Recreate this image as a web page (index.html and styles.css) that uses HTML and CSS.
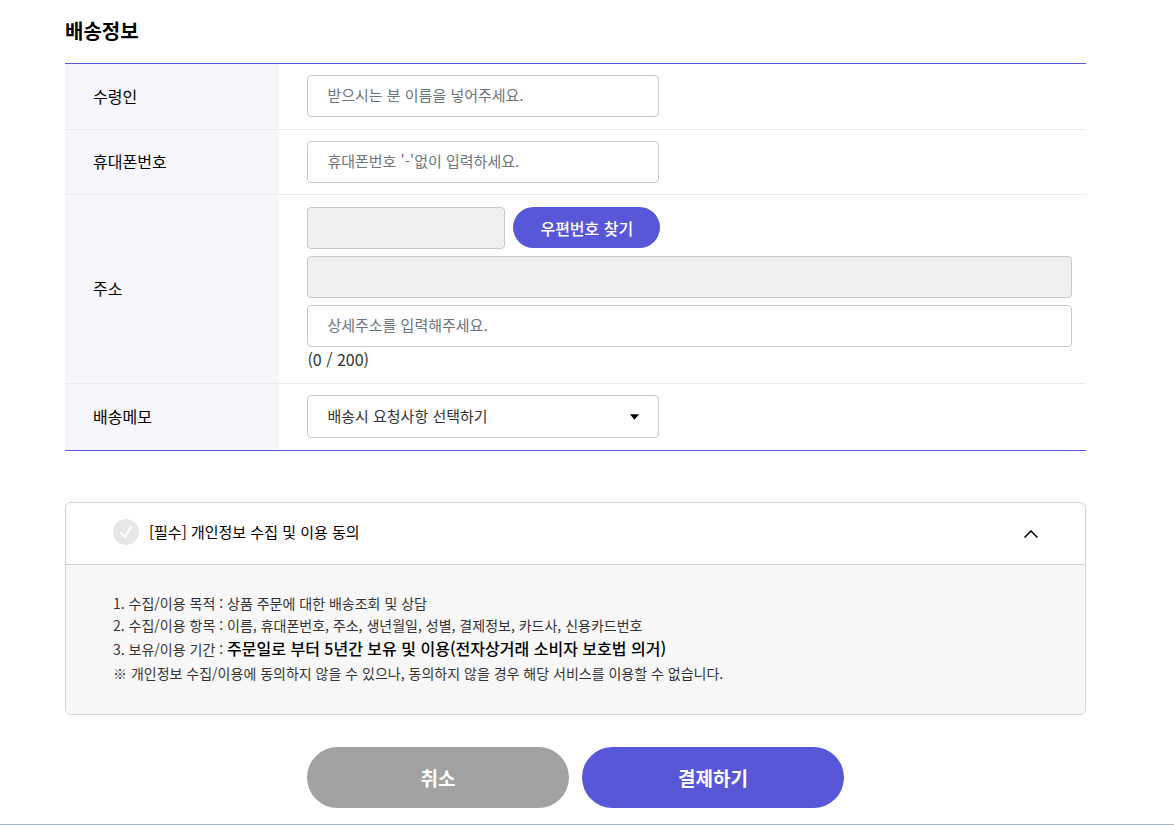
FILE: index.html
```html
<!DOCTYPE html>
<html lang="ko">
<head>
<meta charset="utf-8">
<meta name="viewport" content="width=device-width, initial-scale=1">
<title>배송정보</title>
<link rel="stylesheet" href="styles.css">
</head>
<body>
<form class="page">
  <h2 class="title">배송정보</h2>
  <table class="ship">
    <tbody>
      <tr>
        <th scope="row"><label for="name">수령인</label></th>
        <td><input class="field half" id="name" type="text" placeholder="받으시는 분 이름을 넣어주세요."></td>
      </tr>
      <tr>
        <th scope="row"><label for="phone">휴대폰번호</label></th>
        <td><input class="field half" id="phone" type="tel" placeholder="휴대폰번호 '-'없이 입력하세요."></td>
      </tr>
      <tr>
        <th scope="row"><label for="detail">주소</label></th>
        <td class="address-cell">
          <div class="address">
            <div class="zip">
              <input class="field code" type="text" aria-label="우편번호" readonly>
              <button class="find" type="button">우편번호 찾기</button>
            </div>
            <input class="field" type="text" aria-label="기본주소" readonly>
            <input class="field" id="detail" type="text" maxlength="200" placeholder="상세주소를 입력해주세요.">
          </div>
          <p class="count">(0 / 200)</p>
        </td>
      </tr>
      <tr>
        <th scope="row"><label for="memo">배송메모</label></th>
        <td>
          <div class="select half">
            <select class="field" id="memo"><option>배송시 요청사항 선택하기</option></select>
            <svg class="caret" viewBox="0 0 10 6" aria-hidden="true"><path d="M0 0h10L5 6z"/></svg>
          </div>
        </td>
      </tr>
    </tbody>
  </table>

  <section class="consent">
    <div class="consent-head">
      <label class="agree">
        <input class="check" type="checkbox">
        <svg class="tick" viewBox="0 0 26 26" aria-hidden="true"><circle cx="13" cy="13" r="13"/><path d="M8 14l4 4 6-10"/></svg>
        <span>[필수] 개인정보 수집 및 이용 동의</span>
      </label>
      <button class="toggle" type="button" aria-label="접기" aria-expanded="true">
        <svg viewBox="0 0 14 8" aria-hidden="true"><path d="M.5 7.5L7 1l6.500 6.500"/></svg>
      </button>
    </div>
    <div class="terms">
      <p>1. 수집/이용 목적 : 상품 주문에 대한 배송조회 및 상담</p>
      <p>2. 수집/이용 항목 : 이름, 휴대폰번호, 주소, 생년월일, 성별, 결제정보, 카드사, 신용카드번호</p>
      <p class="period">3. 보유/이용 기간 : <strong>주문일로 부터 5년간 보유 및 이용(전자상거래 소비자 보호법 의거)</strong></p>
      <p>※ 개인정보 수집/이용에 동의하지 않을 수 있으나, 동의하지 않을 경우 해당 서비스를 이용할 수 없습니다.</p>
    </div>
  </section>

  <div class="actions">
    <button class="action cancel" type="button">취소</button>
    <button class="action pay" type="submit">결제하기</button>
  </div>
</form>
</body>
</html>
```
FILE: styles.css
```css
* { box-sizing: border-box; }

body {
  margin: 0;
  background: #fff;
  color: #333;
  font-family: "Noto Sans CJK KR", "Noto Sans", sans-serif;
}

button, input, select { font: inherit; }
button { cursor: pointer; }
p { margin: 0; }

.page {
  padding: 16px 88px 16px 65px;
  border-bottom: 1px solid #a9b4bd;
}

.title {
  margin: 0 0 17px;
  color: #000;
  font-size: 20px;
  line-height: 30px;
  font-weight: 700;
}

.ship {
  width: 100%;
  border-collapse: collapse;
  table-layout: fixed;
  border-top: 1px solid #5857d7;
  border-bottom: 1px solid #5857d7;
}
.ship tr + tr { border-top: 1px solid #ebebeb; }
.ship th {
  width: 21%;
  padding: 0 28px 2px;
  background: #f6f6fb;
  color: #000;
  font-size: 16px;
  line-height: 24px;
  font-weight: 400;
  text-align: left;
}
.ship td { padding: 11px 14px 11px 28px; }
.ship tr:first-child td,
.ship tr:last-child td { padding-bottom: 12px; }
.ship .address-cell { padding-top: 12px; }

.field {
  display: block;
  width: 100%;
  height: 42px;
  padding: 0 19px 3px;
  border: 1px solid #c9c9c9;
  border-radius: 4px;
  background: #fff;
  color: #333;
  font-size: 15px;
}
.field::placeholder { color: #6c757d; opacity: 1; }
.field:read-only:not(select) { background: #f0f0f0; }
.half { width: 352px; max-width: 100%; }

.address { display: grid; gap: 7px; }
.zip { display: flex; gap: 8px; }
.code { width: 198px; }
.find {
  height: 41px;
  padding: 0 27px;
  border: 0;
  border-radius: 21px;
  background: #5857d7;
  color: #fff;
  font-size: 16px;
  font-weight: 500;
}
.count { font-size: 16px; line-height: 25px; }

.select { position: relative; }
.select .field { height: 43px; appearance: none; }
.caret {
  position: absolute;
  top: 19px;
  right: 20px;
  width: 9px;
  height: 6px;
  pointer-events: none;
}

.consent {
  margin-top: 51px;
  border: 1px solid #d2d2d2;
  border-radius: 6px;
  overflow: hidden;
}
.consent-head {
  display: flex;
  align-items: center;
  justify-content: space-between;
  padding: 15px 47px 19px;
}
.agree {
  display: flex;
  align-items: center;
  gap: 10px;
  color: #000;
  font-size: 15px;
  line-height: 27px;
}
.check { position: absolute; opacity: 0; }
.tick { width: 26px; height: 26px; }
.tick circle { fill: #e7e7e7; }
.tick path {
  fill: none;
  stroke: #fff;
  stroke-width: 2;
  stroke-linecap: round;
  stroke-linejoin: round;
}
.check:checked + .tick circle { fill: #5857d7; }
.toggle {
  display: flex;
  padding: 4px 0 0;
  border: 0;
  background: none;
}
.toggle svg {
  width: 14px;
  height: 8px;
  fill: none;
  stroke: #000;
  stroke-width: 1.5;
}

.terms {
  padding: 27px 47px 30px;
  border-top: 1px solid #d2d2d2;
  background: #f8f8f8;
  font-size: 14px;
  line-height: 22px;
}
.period { line-height: 25px; }
.terms strong { color: #000; font-size: 16px; font-weight: 500; }

.actions {
  display: flex;
  justify-content: center;
  gap: 13px;
  margin-top: 32px;
}
.action {
  width: 262px;
  height: 61px;
  border: 0;
  border-radius: 31px;
  color: #fff;
  font-size: 19px;
  font-weight: 700;
}
.cancel { background: #a2a2a2; }
.pay { background: #5857d7; }
```
